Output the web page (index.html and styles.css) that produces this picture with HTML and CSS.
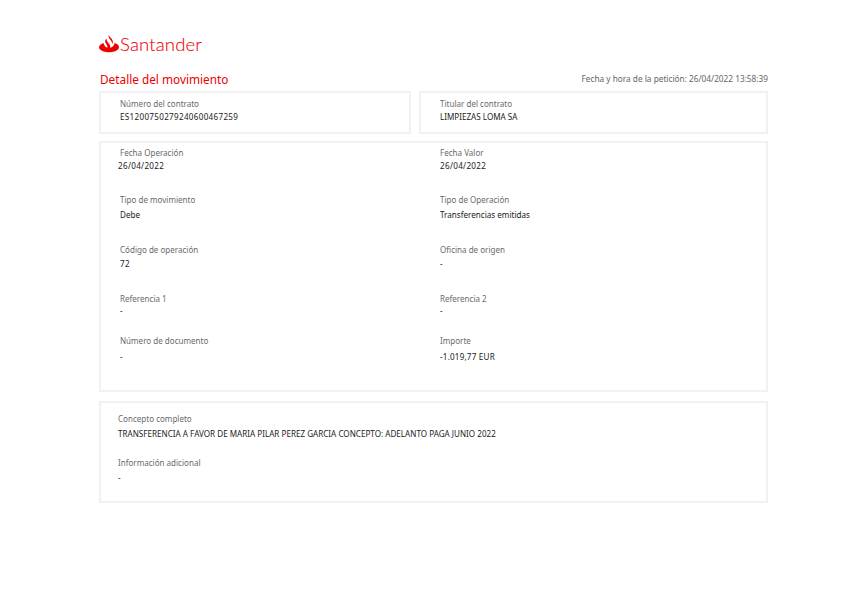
FILE: index.html
```html
<!DOCTYPE html>
<html lang="es">
<head>
<meta charset="utf-8">
<title>Detalle del movimiento</title>
<link rel="stylesheet" href="styles.css">
</head>
<body>
<main class="page">
  <header class="logo">
    <svg class="logo-mark" width="20" height="18" viewBox="0 0 20 18" aria-hidden="true">
      <path fill="#ec0000" d="M9.600 0C9.200 1.800 10.100 3 11.200 4.500C12.300 6 13.300 7.300 13.200 9.200C14.200 7.600 14 5.900 13 4.300C12 2.800 10.500 1.800 9.600 0ZM7.700 3.600C7.300 5.400 8.200 6.600 9.400 8.100C10.600 9.600 11.600 10.900 11.300 12.900C13.700 11.900 15.300 10.300 15.600 8C18.200 8.700 20 10.200 20 12.200C20 15 15.500 17.200 10 17.200C4.500 17.200 0 15 0 12.200C0 10.200 1.900 8.600 4.700 7.900C4.800 9.900 6.100 11.600 8.300 12.800C8.700 11 7.800 9.700 6.800 8.300C5.900 7 5.700 5.200 7.700 3.600Z"/>
    </svg>
    <span class="logo-text">Santander</span>
  </header>
  <div class="title-row">
    <h1 class="title">Detalle del movimiento</h1>
    <p class="timestamp">Fecha y hora de la petición: 26/04/2022 13:58:39</p>
  </div>
  <section class="top-cards">
    <div class="card top-card">
      <div class="label">Número del contrato</div>
      <div class="value num">ES1200750279240600467259</div>
    </div>
    <div class="card top-card">
      <div class="label">Titular del contrato</div>
      <div class="value">LIMPIEZAS LOMA SA</div>
    </div>
  </section>
  <section class="card details">
    <div class="field r1"><div class="label">Fecha Operación</div><div class="value num outdent">26/04/2022</div></div>
    <div class="field r1"><div class="label">Fecha Valor</div><div class="value num">26/04/2022</div></div>
    <div class="field r2"><div class="label">Tipo de movimiento</div><div class="value">Debe</div></div>
    <div class="field r2"><div class="label">Tipo de Operación</div><div class="value">Transferencias emitidas</div></div>
    <div class="field r3"><div class="label">Código de operación</div><div class="value num">72</div></div>
    <div class="field r3"><div class="label">Oficina de origen</div><div class="value">-</div></div>
    <div class="field r4"><div class="label">Referencia 1</div><div class="value">-</div></div>
    <div class="field r4"><div class="label">Referencia 2</div><div class="value">-</div></div>
    <div class="field r5"><div class="label">Número de documento</div><div class="value">-</div></div>
    <div class="field r5"><div class="label">Importe</div><div class="value amount">-1.019,77 EUR</div></div>
  </section>
  <section class="card concept">
    <div class="label">Concepto completo</div>
    <div class="value concept-text">TRANSFERENCIA A FAVOR DE MARIA PILAR PEREZ GARCIA CONCEPTO: ADELANTO PAGA JUNIO 2022</div>
    <div class="label extra">Información adicional</div>
    <div class="value extra-value">-</div>
  </section>
</main>
</body>
</html>
```
FILE: styles.css
```css
* { box-sizing: border-box; }
html, body { margin: 0; padding: 0; background: #fff; }
body { font-family: "Noto Sans", "Open Sans", sans-serif; font-size: 8.05px; line-height: 12px; }
.page { width: 842px; height: 595px; padding: 33px 74px 0 99px; overflow: hidden; }
.logo { display: flex; align-items: center; height: 22px; }
.logo-mark { display: block; }
.logo-text { font-family: Lato, sans-serif; font-weight: 300; font-size: 18.5px; line-height: 22px; color: #ec0000; margin-left: 1px; letter-spacing: 0.15px; -webkit-text-stroke: 0.1px #ec0000; }
.title-row { display: flex; justify-content: space-between; align-items: flex-start; height: 36px; padding: 15px 0 0 1px; }
.title { margin: 0; font-weight: 400; font-size: 11.8px; line-height: 18px; color: #ec0000; }
.timestamp { margin: 2px 0 0; color: #666; font-size: 8.28px; line-height: 14px; }
.card { border: 2px solid #f1f1f1; }
.top-cards { display: grid; grid-template-columns: 312px 349px; gap: 8px; height: 43px; }
.top-cards .card { padding: 5px 0 0 19px; }
.label { color: #6a6a6a; }
.value { color: #222; font-size: 8.1px; }
.num { letter-spacing: 0.31px; }
.amount { letter-spacing: 0.2px; }
.top-card .value { margin-top: 1px; }
.details { display: grid; grid-template-columns: 320px 1fr; grid-template-rows: 47px 50px 49px 42px 1fr; height: 251px; margin-top: 7px; padding: 4px 0 0 19px; }
.r1 .value { margin-top: 1px; }
.r2 .value { margin-top: 3px; }
.r3 .value { margin-top: 2px; }
.r4 .value { margin-top: 0; }
.r5 .value { margin-top: 4px; }
.outdent { margin-left: -2px; }
.concept { height: 102px; margin-top: 9px; padding: 10px 0 0 17px; }
.concept-text { margin-top: 3px; }
.extra { margin-top: 17px; }
.extra-value { margin-top: 3px; }
```
